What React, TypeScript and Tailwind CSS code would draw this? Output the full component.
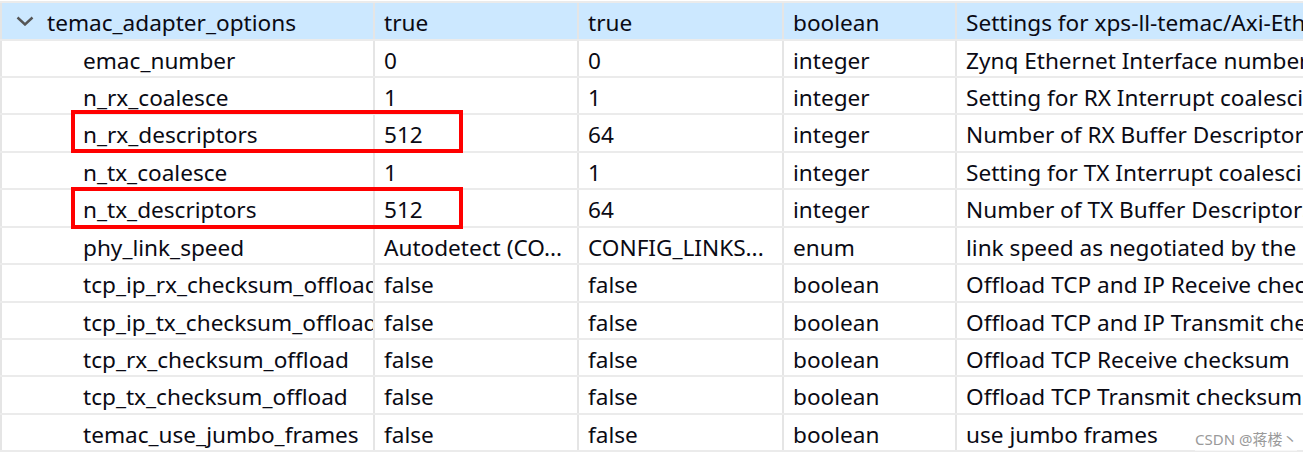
interface Row {
  name: string;
  value: string;
  def: string;
  type: string;
  desc: string;
  h: number;
  parent?: boolean;
}

// heights include the 2px grid line under each row
const rows: Row[] = [
  { name: 'temac_adapter_options', value: 'true', def: 'true', type: 'boolean', desc: 'Settings for xps-ll-temac/Axi-Ethernet', h: 38, parent: true },
  { name: 'emac_number', value: '0', def: '0', type: 'integer', desc: 'Zynq Ethernet Interface number', h: 37 },
  { name: 'n_rx_coalesce', value: '1', def: '1', type: 'integer', desc: 'Setting for RX Interrupt coalescing', h: 37 },
  { name: 'n_rx_descriptors', value: '512', def: '64', type: 'integer', desc: 'Number of RX Buffer Descriptors', h: 38 },
  { name: 'n_tx_coalesce', value: '1', def: '1', type: 'integer', desc: 'Setting for TX Interrupt coalescing', h: 37 },
  { name: 'n_tx_descriptors', value: '512', def: '64', type: 'integer', desc: 'Number of TX Buffer Descriptors', h: 38 },
  { name: 'phy_link_speed', value: 'Autodetect (CO...', def: 'CONFIG_LINKS...', type: 'enum', desc: 'link speed as negotiated by the PHY', h: 37 },
  { name: 'tcp_ip_rx_checksum_offload', value: 'false', def: 'false', type: 'boolean', desc: 'Offload TCP and IP Receive checksum', h: 38 },
  { name: 'tcp_ip_tx_checksum_offload', value: 'false', def: 'false', type: 'boolean', desc: 'Offload TCP and IP Transmit checksum', h: 37 },
  { name: 'tcp_rx_checksum_offload', value: 'false', def: 'false', type: 'boolean', desc: 'Offload TCP Receive checksum', h: 37 },
  { name: 'tcp_tx_checksum_offload', value: 'false', def: 'false', type: 'boolean', desc: 'Offload TCP Transmit checksum', h: 38 },
  { name: 'temac_use_jumbo_frames', value: 'false', def: 'false', type: 'boolean', desc: 'use jumbo frames', h: 37 },
];

const cell = 'overflow-hidden whitespace-nowrap border-r-2 border-[#e5e5e5] flex items-center pt-[4px]';

const App = () => {
  return (
    <div
      className="relative h-[455px] w-[1303px] overflow-hidden bg-white pt-[1px] text-[22.6px] text-[#0a0a14]"
      style={{ fontFamily: '"Noto Sans", "Noto Sans CJK SC", sans-serif' }}
    >
      <div className="border-t-2 border-[#ebebeb]">
        {rows.map((r) => (
          <div
            key={r.name}
            className={`grid grid-cols-[375px_204px_205px_173px_1fr] border-b-2 border-[#ebebeb] ${
              r.parent ? 'bg-[#cce8ff]' : 'bg-white'
            }`}
            style={{ height: r.h }}
          >
            <div className={`${cell} border-l-2 pl-[14px]`}>
              {r.parent ? (
                <>
                  <svg width="18" height="10" viewBox="0 0 18 10" className="mr-[13px] -mt-[4px]">
                    <polyline points="1.5,1.5 9,8.5 16.5,1.5" fill="none" stroke="#555" strokeWidth="2.4" />
                  </svg>
                  <span className="mr-[-1px]">{r.name}</span>
                </>
              ) : (
                <span className="pl-[67px]">{r.name}</span>
              )}
            </div>
            <div className={`${cell} pl-[9px]`}>{r.value}</div>
            <div className={`${cell} pl-[9px]`}>{r.def}</div>
            <div className={`${cell} pl-[9px]`}>{r.type}</div>
            <div className="flex items-center overflow-hidden whitespace-nowrap pl-[9px] pt-[4px]">{r.desc}</div>
          </div>
        ))}
      </div>

      {/* highlight boxes */}
      <div className="absolute left-[71px] top-[110px] h-[43px] w-[392px] border-4 border-[#ff0000]" />
      <div className="absolute left-[71px] top-[187px] h-[42px] w-[392px] border-4 border-[#ff0000]" />

      {/* watermark */}
      <div className="absolute left-[1195px] top-[428px] bg-white/60 text-[15px] text-[#9a9a9a]">CSDN @蒋楼丶</div>
    </div>
  );
};

export default App;
